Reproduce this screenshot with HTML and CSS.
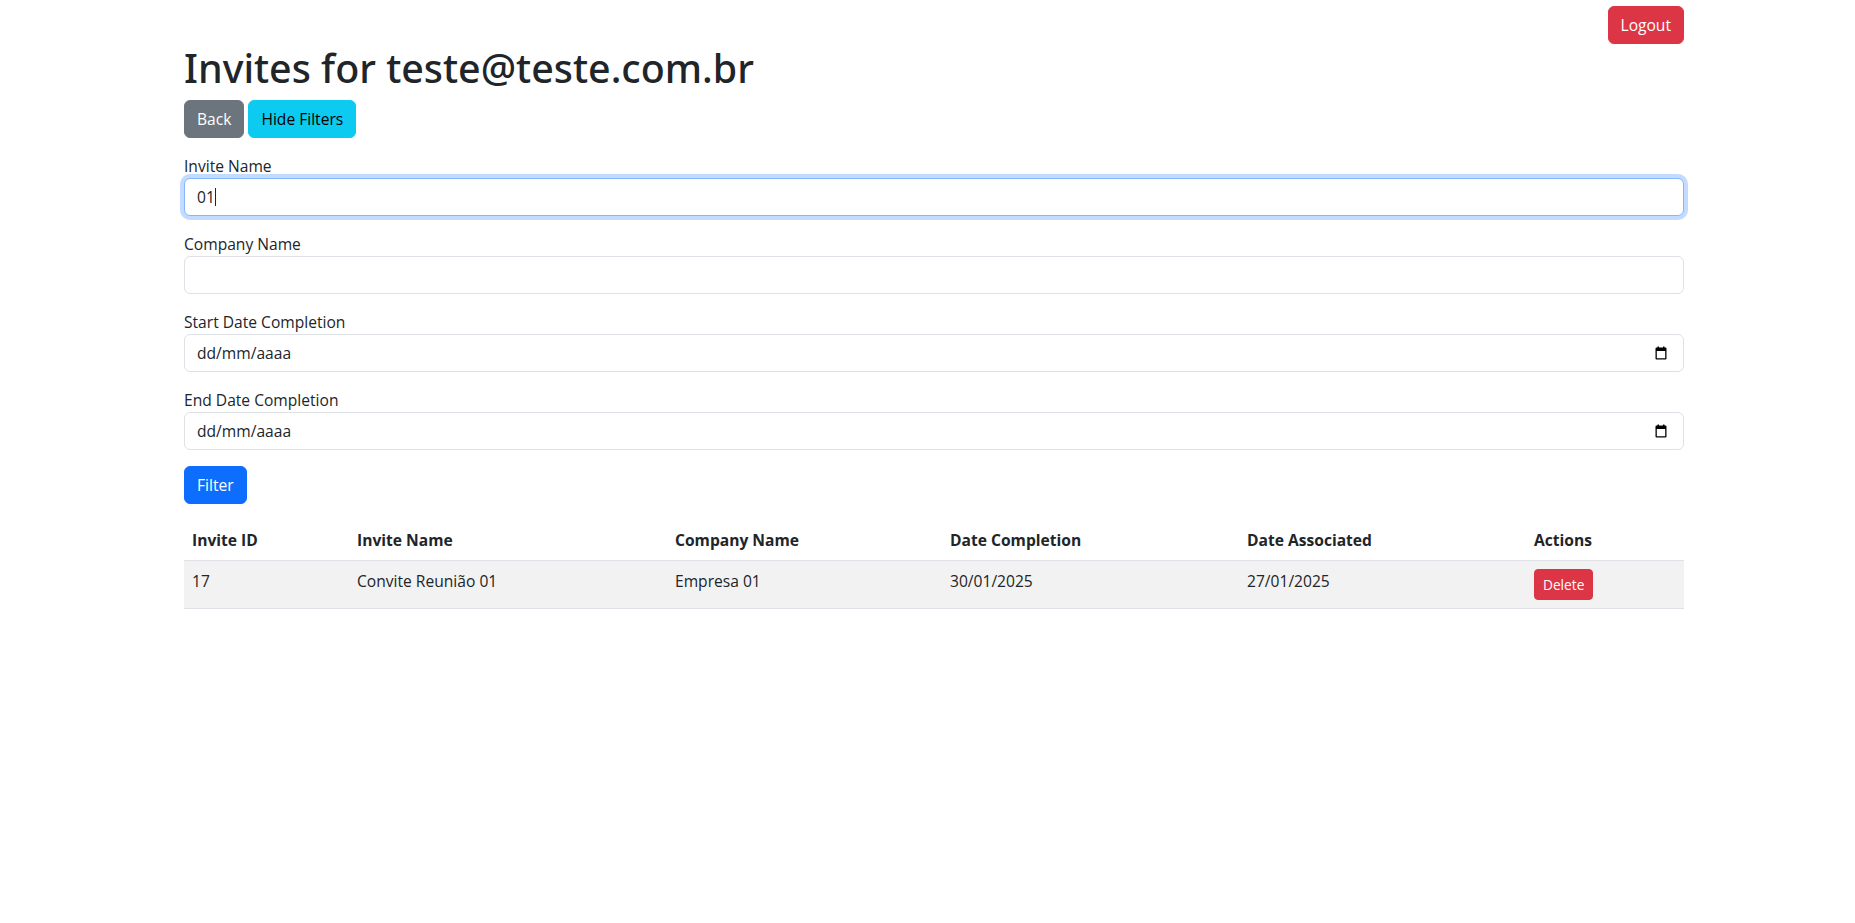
FILE: index.html
```html
<!DOCTYPE html>
<html lang="en">
<head>
<meta charset="utf-8">
<title>Invites</title>
<link rel="stylesheet" href="styles.css">
</head>
<body>
<div class="container">
  <div class="topbar">
    <button type="button" class="btn btn-danger">Logout</button>
  </div>
  <h1 class="title">Invites for teste@teste.com.br</h1>
  <div class="actions">
    <button type="button" class="btn btn-secondary">Back</button>
    <button type="button" class="btn btn-info">Hide Filters</button>
  </div>
  <form class="filters">
    <div class="field">
      <label for="inviteName">Invite Name</label>
      <div class="input-wrap">
        <input id="inviteName" class="form-control is-focused" type="text" value="01">
        <span class="caret" aria-hidden="true"></span>
      </div>
    </div>
    <div class="field">
      <label for="companyName">Company Name</label>
      <input id="companyName" class="form-control" type="text">
    </div>
    <div class="field">
      <label>Start Date Completion</label>
      <div class="form-control date-control">
        <span>dd/mm/aaaa</span>
        <svg class="cal-icon" width="14" height="14" viewBox="0 0 14 14" aria-hidden="true"><path d="M2.5 1.5h1V0.5h1.5v1h4v-1h1.5v1h1a1 1 0 0 1 1 1v10a1 1 0 0 1-1 1h-9a1 1 0 0 1-1-1v-10a1 1 0 0 1 1-1zM2.8 5v7.2h8.4V5z" fill="#000"/></svg>
      </div>
    </div>
    <div class="field">
      <label>End Date Completion</label>
      <div class="form-control date-control">
        <span>dd/mm/aaaa</span>
        <svg class="cal-icon" width="14" height="14" viewBox="0 0 14 14" aria-hidden="true"><path d="M2.5 1.5h1V0.5h1.5v1h4v-1h1.5v1h1a1 1 0 0 1 1 1v10a1 1 0 0 1-1 1h-9a1 1 0 0 1-1-1v-10a1 1 0 0 1 1-1zM2.8 5v7.2h8.4V5z" fill="#000"/></svg>
      </div>
    </div>
    <button type="button" class="btn btn-primary">Filter</button>
  </form>
  <table class="table">
    <colgroup>
      <col class="c-id"><col class="c-name"><col class="c-company"><col class="c-done"><col class="c-assoc"><col class="c-actions">
    </colgroup>
    <thead>
      <tr><th>Invite ID</th><th>Invite Name</th><th>Company Name</th><th>Date Completion</th><th>Date Associated</th><th>Actions</th></tr>
    </thead>
    <tbody>
      <tr><td>17</td><td>Convite Reunião 01</td><td>Empresa 01</td><td>30/01/2025</td><td>27/01/2025</td><td><button type="button" class="btn btn-danger btn-sm">Delete</button></td></tr>
    </tbody>
  </table>
</div>
</body>
</html>
```

FILE: styles.css
```css
* { box-sizing: border-box; }
body {
  margin: 0;
  font-family: "Open Sans", "Noto Sans", sans-serif;
  font-size: 15.6px;
  line-height: 24px;
  color: #212529;
  background: #fff;
}
.container {
  width: 1500px;
  margin-left: 184px;
}
.topbar {
  display: flex;
  justify-content: flex-end;
  padding-top: 6px;
}
.title {
  margin: 0 0 8px;
  font-family: "Noto Sans", "Open Sans", sans-serif;
  font-size: 39.4px;
  font-weight: 500;
  line-height: 48px;
}
.actions {
  display: flex;
  gap: 4px;
  margin-bottom: 16px;
}
.btn {
  display: inline-block;
  padding: 6px 12px;
  font-family: inherit;
  font-size: 15.6px;
  line-height: 24px;
  border: 1px solid transparent;
  border-radius: 6px;
  cursor: pointer;
}
.btn-sm {
  padding: 4px 8px;
  font-size: 13.7px;
  line-height: 21px;
  border-radius: 4px;
}
.btn-danger { background: #dc3545; border-color: #dc3545; color: #fff; }
.btn-secondary { background: #6c757d; border-color: #6c757d; color: #fff; }
.btn-info { background: #0dcaf0; border-color: #0dcaf0; color: #000; }
.btn-primary { background: #0d6efd; border-color: #0d6efd; color: #fff; }
.filters { margin-bottom: 16px; }
.field { margin-bottom: 16px; }
.field label { display: block; line-height: 24px; }
.input-wrap { position: relative; }
.caret {
  position: absolute;
  left: 31px;
  top: 10px;
  width: 1px;
  height: 18px;
  background: #212529;
}
.form-control {
  display: block;
  width: 100%;
  height: 38px;
  padding: 6px 12px;
  font-family: inherit;
  font-size: 15.6px;
  line-height: 24px;
  color: #212529;
  background: #fff;
  border: 1px solid #dee2e6;
  border-radius: 6px;
  outline: none;
}
.form-control.is-focused, .form-control:focus {
  border-color: #86b7fe;
  box-shadow: 0 0 0 4px rgba(13, 110, 253, 0.25);
}
.date-control {
  display: flex;
  align-items: center;
  justify-content: space-between;
  padding-right: 15px;
}
.cal-icon { display: block; }
.table {
  width: 100%;
  border-collapse: collapse;
  color: #212529;
}
.table th, .table td {
  padding: 8px;
  text-align: left;
  border-bottom: 1px solid #dee2e6;
}
.table thead th { vertical-align: bottom; font-weight: 700; }
.table tbody td { vertical-align: top; background: #f2f2f2; }
.c-id { width: 165px; }
.c-name { width: 318px; }
.c-company { width: 275px; }
.c-done { width: 297px; }
.c-assoc { width: 287px; }
.c-actions { width: 158px; }
```
